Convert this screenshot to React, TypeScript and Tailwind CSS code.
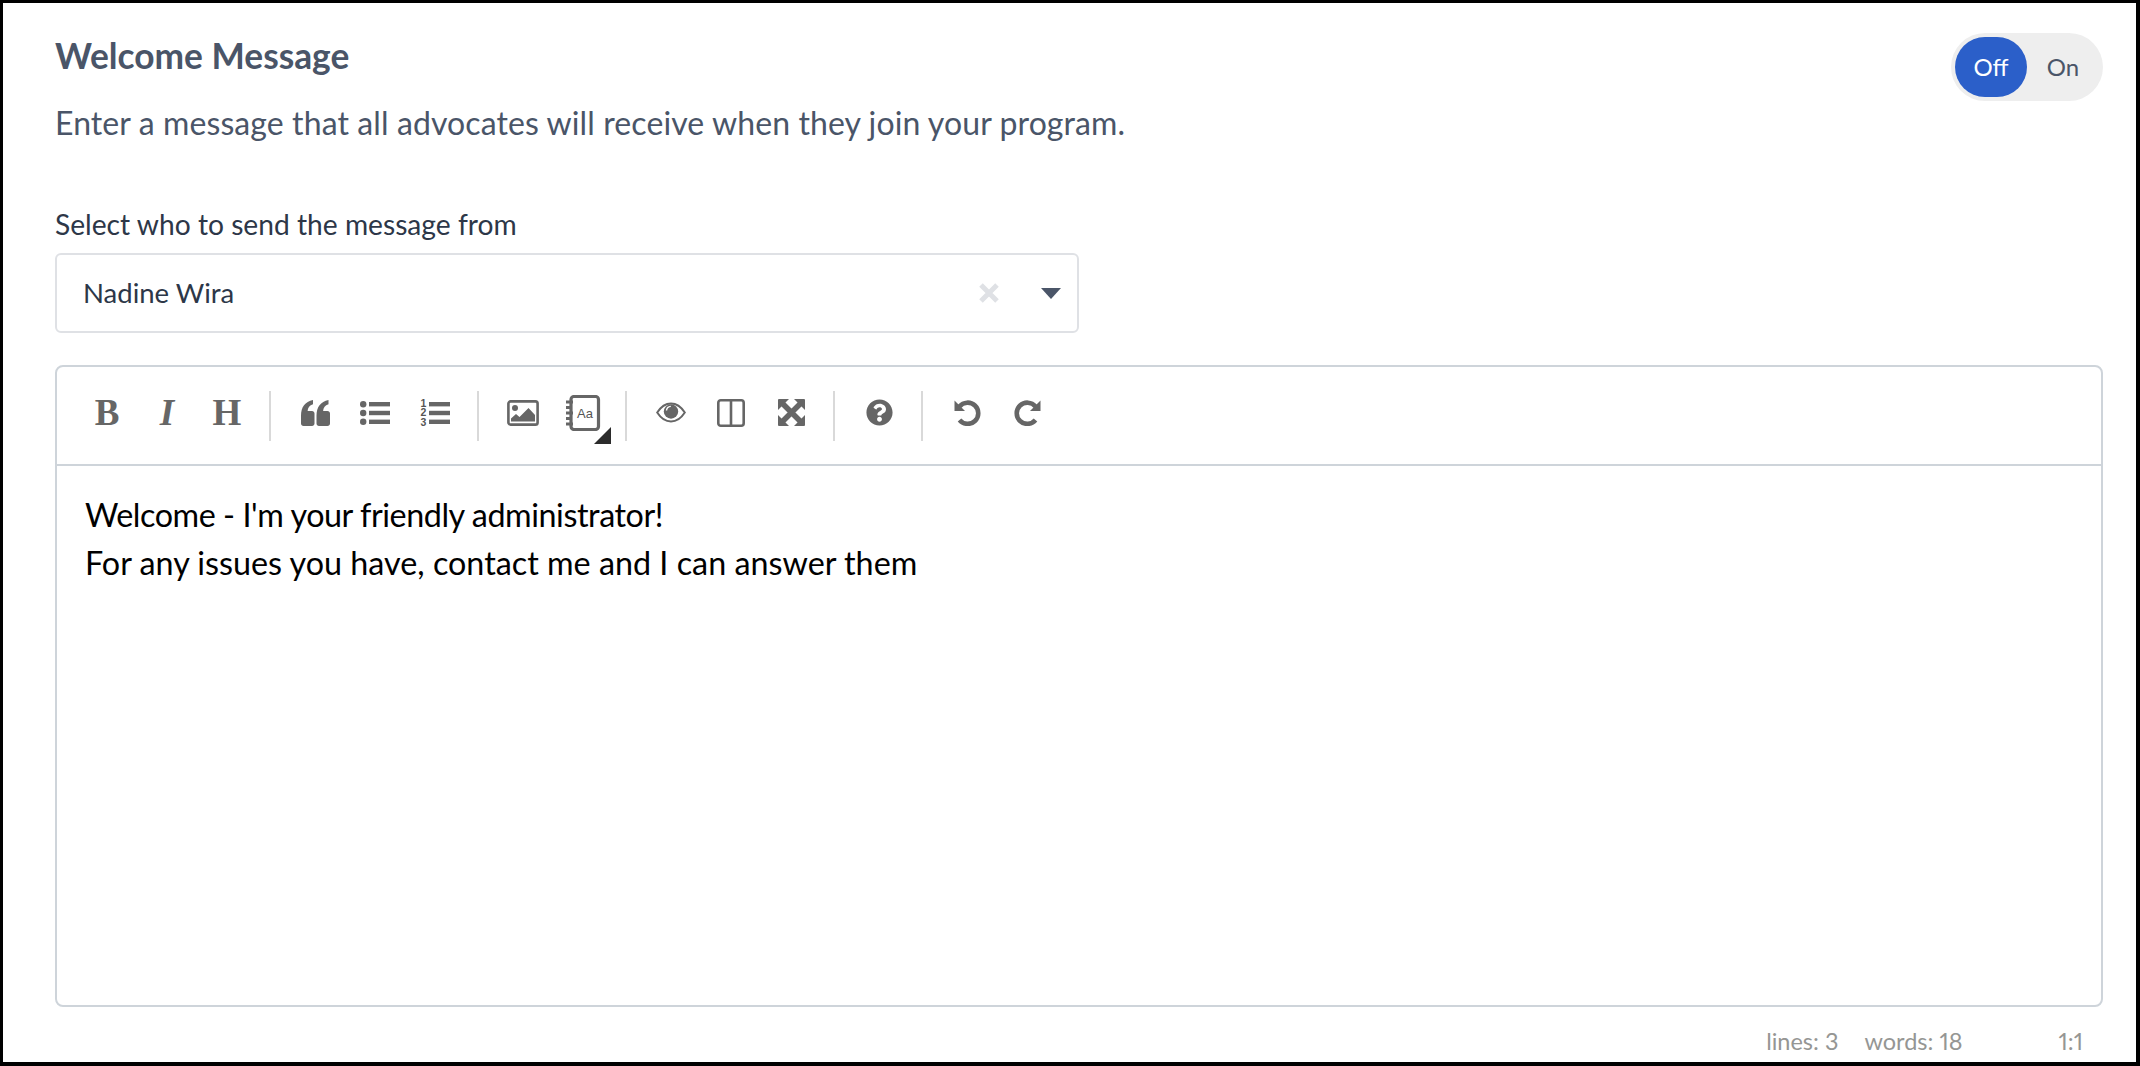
import React from "react";
import { FaQuestionCircle } from "react-icons/fa";

const Btn = ({ children }: { children: React.ReactNode }) => (
  <div className="relative w-[60px] h-[60px] pb-[6px] flex items-center justify-center text-[#666666]">{children}</div>
);
const Sep = () => <div className="w-[2px] h-[50px] bg-[#d9d9d9] ml-[12px] mr-[14px]" />;
const Glyph = ({ children, italic }: { children: React.ReactNode; italic?: boolean }) => (
  <span className={`font-['Liberation_Serif',serif] text-[37px] leading-[30px] font-bold text-[#666666] ${italic ? "italic" : ""}`}>{children}</span>
);

const Quote = () => (
  <svg width="29" height="26" viewBox="0 0 29 26" fill="#666666">
    <path d="M0 15.5C0 7 4 1.8 12 0v4.2C8.6 5.4 6.8 7.6 6.6 11H11c1.4 0 2.5 1.1 2.5 2.5V23.5c0 1.4-1.1 2.5-2.5 2.5H2.5C1.1 26 0 24.9 0 23.5V15.5Z" />
    <path d="M15.5 15.5C15.5 7 19.5 1.8 27.5 0v4.2c-3.4 1.2-5.2 3.4-5.4 6.8h4.4c1.4 0 2.5 1.1 2.5 2.5v10c0 1.4-1.1 2.5-2.5 2.5H18c-1.4 0-2.5-1.1-2.5-2.5V15.5Z" />
  </svg>
);
const ListUl = () => (
  <svg width="30" height="24" viewBox="0 0 30 24" fill="#666666">
    <circle cx="3.2" cy="3.2" r="3.2" /><circle cx="3.2" cy="12" r="3.2" /><circle cx="3.2" cy="20.8" r="3.2" />
    <rect x="9" y="1" width="21" height="4.4" /><rect x="9" y="9.8" width="21" height="4.4" /><rect x="9" y="18.6" width="21" height="4.4" />
  </svg>
);
const ListOl = () => (
  <svg width="32" height="40" viewBox="0 -6 32 40" fill="#555555" className="-mx-[1px] -my-[6px]">
    <text x="4.5" y="8" textAnchor="middle" fontSize="10.5" fontWeight="700" fontFamily="'Liberation Sans', sans-serif">1</text>
    <text x="4.5" y="17" textAnchor="middle" fontSize="10.5" fontWeight="700" fontFamily="'Liberation Sans', sans-serif">2</text>
    <text x="4.5" y="26.5" textAnchor="middle" fontSize="10.5" fontWeight="700" fontFamily="'Liberation Sans', sans-serif">3</text>
    <rect x="10" y="3" width="21" height="4.4" fill="#666666" /><rect x="10" y="11.8" width="21" height="4.4" fill="#666666" /><rect x="10" y="20.6" width="21" height="4.4" fill="#666666" />
  </svg>
);
const ImageIcon = () => (
  <svg width="32" height="26" viewBox="0 0 32 26">
    <rect x="1.4" y="1.4" width="29.2" height="23.2" rx="2.2" fill="none" stroke="#666666" strokeWidth="2.6" />
    <circle cx="8" cy="8" r="3" fill="#666666" />
    <path d="M4 21.5v-3l5-4.5 3.5 3 9-9 6.5 7v6.5Z" fill="#666666" />
  </svg>
);
const Eye = () => (
  <svg width="30" height="21" viewBox="0 0 30 21">
    <path d="M1.2 10.5C5 4.6 9.6 1.5 15 1.5s10 3.1 13.8 9C25 16.4 20.4 19.5 15 19.5S5 16.4 1.2 10.5Z" fill="none" stroke="#666666" strokeWidth="2" />
    <circle cx="15" cy="9.5" r="7.2" fill="#666666" />
    <path d="M10.5 8.5c.3-2.4 2-3.9 4.3-4.1" fill="none" stroke="#ffffff" strokeWidth="1.4" />
  </svg>
);
const Columns = () => (
  <svg width="28" height="28" viewBox="0 0 28 28" fill="none" stroke="#666666" strokeWidth="2.6">
    <rect x="1.3" y="1.3" width="25.4" height="25.4" rx="2.5" />
    <path d="M14 1.3v25.4" />
  </svg>
);
const Expand = () => (
  <svg width="27" height="27" viewBox="0 0 27 27" fill="#666666">
    <path d="M0 1a1 1 0 0 1 1-1h10L0 11Z" />
    <path d="M27 1a1 1 0 0 0-1-1H16l11 11Z" />
    <path d="M0 26a1 1 0 0 0 1 1h10L0 16Z" />
    <path d="M27 26a1 1 0 0 1-1 1H16l11-11Z" />
    <path d="M5 5l17 17M22 5L5 22" stroke="#666666" strokeWidth="5.5" fill="none" />
  </svg>
);
const Undo = () => (
  <svg width="27" height="27" viewBox="0 0 27 27">
    <path d="M5.5 7.5A10.6 10.6 0 1 1 5.5 21" fill="none" stroke="#666666" strokeWidth="4.6" />
    <path d="M0.5 1.5V12H11Z" fill="#666666" />
  </svg>
);
const Redo = () => (
  <svg width="27" height="27" viewBox="0 0 27 27">
    <path d="M21.5 7.5A10.6 10.6 0 1 0 21.5 21" fill="none" stroke="#666666" strokeWidth="4.6" />
    <path d="M26.5 1.5V12H16Z" fill="#666666" />
  </svg>
);
const Book = () => (
  <svg width="36" height="36" viewBox="0 0 36 36">
    <rect x="6" y="1.5" width="27.5" height="33" rx="3" fill="#ffffff" stroke="#666666" strokeWidth="3.2" />
    <path d="M1 7h7M1 12.5h5M1 18h7M1 23.5h5M1 29h7" stroke="#666666" strokeWidth="3" />
    <text x="20" y="22.5" textAnchor="middle" fontSize="13" fill="#555555" fontFamily="'Liberation Sans', sans-serif">Aa</text>
  </svg>
);

export default function App() {
  return (
    <div className="w-[2140px] h-[1066px] bg-white border-[3px] border-r-4 border-b-4 border-black pl-[52px] pr-[33px] pt-[30px] font-['Lato','Open_Sans',sans-serif] overflow-hidden">
      <div className="flex items-start justify-between">
        <div>
          <h1 className="mt-[3px] text-[35.3px] leading-[40px] font-bold text-[#4a5568]">Welcome Message</h1>
          <p className="mt-[27px] text-[32px] tracking-[0.1px] leading-[40px] text-[#4a5568]">Enter a message that all advocates will receive when they join your program.</p>
        </div>
        <div className="w-[152px] h-[68px] rounded-full bg-[#eeeeee] p-[4px] flex items-center text-[24px]">
          <div className="w-[72px] h-[60px] rounded-full bg-[#2b5fc9] text-white flex items-center justify-center">Off</div>
          <div className="flex-1 text-center text-[#4a5568]">On</div>
        </div>
      </div>

      <div className="mt-[66px] text-[28.2px] leading-[30px] text-[#2d3748]">Select who to send the message from</div>
      <div className="mt-[14px] w-[1024px] h-[80px] border-2 border-[#dfe1e5] rounded-[6px] flex items-center pl-[26px] text-[27.5px] text-[#2d3748]">
        <span className="flex-1">Nadine Wira</span>
        <svg className="ml-[10px]" width="22" height="22" viewBox="0 0 22 22"><path d="M3 3l16 16M19 3L3 19" stroke="#dfe1e5" strokeWidth="5" /></svg>
        <svg className="ml-[41px] mr-[16px]" width="20" height="11" viewBox="0 0 20 11"><path d="M0 0h20L10 11Z" fill="#4a5568" /></svg>
      </div>

      <div className="mt-[32px] h-[642px] border-2 border-[#ced4da] rounded-[8px] flex flex-col">
        <div className="h-[99px] border-b-2 border-[#ced4da] pl-[20px] flex items-center">
          <Btn><Glyph>B</Glyph></Btn>
          <Btn><Glyph italic>I</Glyph></Btn>
          <Btn><Glyph>H</Glyph></Btn>
          <Sep />
          <Btn><Quote /></Btn>
          <Btn><ListUl /></Btn>
          <Btn><ListOl /></Btn>
          <Sep />
          <Btn><ImageIcon /></Btn>
          <Btn>
            <Book />
            <svg className="absolute left-[41px] top-[41px]" width="17" height="17" viewBox="0 0 17 17"><path d="M17 0v17H0Z" fill="#2b2b2b" /></svg>
          </Btn>
          <Sep />
          <Btn><Eye /></Btn>
          <Btn><Columns /></Btn>
          <Btn><Expand /></Btn>
          <Sep />
          <Btn><FaQuestionCircle size={27} /></Btn>
          <Sep />
          <Btn><Undo /></Btn>
          <Btn><Redo /></Btn>
        </div>
        <div className="pt-[25px] pl-[28px] text-[32.3px] leading-[48px] text-black">
          <div className="tracking-[-0.44px]">Welcome - I'm your friendly administrator!</div>
          <div>For any issues you have, contact me and I can answer them</div>
        </div>
      </div>

      <div className="mt-[21px] flex justify-end pr-[20px] text-[23.5px] leading-[26px] text-[#959694] proportional-nums">
        <span>lines: 3</span>
        <span className="ml-[26px]">words: 18</span>
        <span className="ml-[96px]">1:1</span>
      </div>
    </div>
  );
}
